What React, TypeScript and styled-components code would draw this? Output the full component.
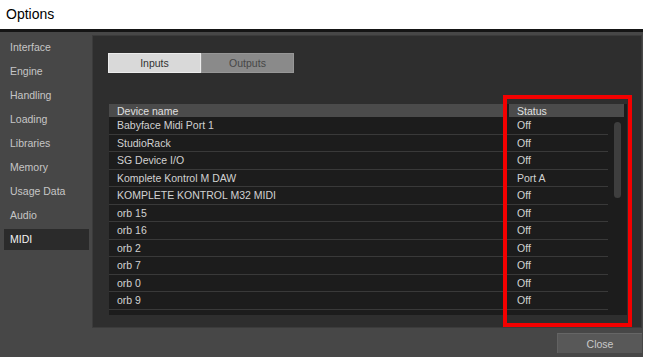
import React from "react";
import styled, { createGlobalStyle } from "styled-components";

const GlobalStyle = createGlobalStyle`
  html, body { margin: 0; padding: 0; background: #ffffff; }
  * { box-sizing: border-box; }
`;

const Window = styled.div`
  position: relative;
  width: 643px;
  height: 357px;
  display: flex;
  flex-direction: column;
  background: #474747;
  font-family: "Liberation Sans", Arial, sans-serif;
  overflow: hidden;
`;

const TitleBar = styled.div`
  height: 29px;
  background: #ffffff;
  color: #000;
  font-family: "Liberation Sans", Arial, sans-serif;
  font-size: 14px;
  padding-left: 6px;
  display: flex;
  align-items: center;
  padding-bottom: 2px;
`;

const Divider = styled.div`
  height: 3px;
  background: #151515;
`;

const Body = styled.div`
  flex: 1;
  display: flex;
  min-height: 0;
`;

const Sidebar = styled.nav`
  width: 92px;
  padding: 4.5px 3px 0 4px;
  display: flex;
  flex-direction: column;
  gap: 3px;
`;

const NavItem = styled.div<{ $active?: boolean }>`
  height: 21px;
  display: flex;
  align-items: center;
  padding-left: 6px;
  font-size: 10.5px;
  color: ${(p) => (p.$active ? "#f2f2f2" : "#c6c6c6")};
  background: ${(p) => (p.$active ? "#2b2b2b" : "transparent")};
`;

const Main = styled.div`
  flex: 1;
  display: flex;
  flex-direction: column;
  padding: 3px 1px 0 0;
`;

const Panel = styled.section`
  height: 293px;
  background: #2e2e2e;
  border: 1px solid #3b3b3b;
  padding: 17px 14px 0 15px;
  display: flex;
  flex-direction: column;
`;

const Tabs = styled.div`
  display: flex;
`;

const Tab = styled.div<{ $active?: boolean }>`
  width: 93px;
  height: 20px;
  display: flex;
  align-items: center;
  justify-content: center;
  font-size: 10.5px;
  color: ${(p) => (p.$active ? "#333333" : "#474747")};
  background: ${(p) => (p.$active ? "#d9d9d9" : "#8a8a8a")};
  border: 1px solid ${(p) => (p.$active ? "#ececec" : "#979797")};
`;

const Table = styled.div`
  margin: 31px 0 0 1px;
  width: 518px;
  height: 211px;
  background: #1c1c1c;
  display: flex;
  flex-direction: column;
  overflow: hidden;
`;

const HeadRow = styled.div`
  height: 13px;
  display: flex;
  gap: 2px;
  padding-right: 3px;
`;

const HeadCell = styled.div<{ $w?: number }>`
  ${(p) => (p.$w ? `width: ${p.$w}px;` : "flex: 1;")}
  background: #4b4b4b;
  color: #e0e0e0;
  font-size: 10.5px;
  padding-left: 8px;
  display: flex;
  align-items: center;
`;

const BodyArea = styled.div`
  flex: 1;
  display: flex;
  min-height: 0;
`;

const Rows = styled.div`
  width: 499px;
  display: flex;
  flex-direction: column;
`;

const Row = styled.div`
  height: 17.5px;
  flex: none;
  display: flex;
  align-items: center;
  border-bottom: 1px solid #393939;
  color: #d2d2d2;
  font-size: 10.5px;
`;

const NameCell = styled.div`
  width: 400px;
  padding-left: 8px;
  white-space: nowrap;
`;

const StatusCell = styled.div`
  flex: 1;
  padding-left: 8px;
`;

const ScrollTrack = styled.div`
  flex: 1;
  padding: 5px 0 0 6px;
`;

const Thumb = styled.div`
  width: 7px;
  height: 76px;
  border-radius: 4px;
  background: #3e3e3e;
`;

const Footer = styled.div`
  flex: 1;
  display: flex;
  justify-content: flex-end;
  align-items: flex-start;
  padding-top: 5px;
`;

const CloseButton = styled.div`
  width: 85px;
  height: 20px;
  background: #585858;
  border-top: 1px solid #666;
  border-left: 1px solid #626262;
  color: #c9c9c9;
  font-size: 10.5px;
  display: flex;
  align-items: center;
  justify-content: center;
`;

const Highlight = styled.div`
  position: absolute;
  left: 503px;
  top: 95px;
  width: 129px;
  height: 232px;
  border: 4px solid #f40000;
  pointer-events: none;
`;

const navItems = [
  "Interface",
  "Engine",
  "Handling",
  "Loading",
  "Libraries",
  "Memory",
  "Usage Data",
  "Audio",
  "MIDI",
];

const devices: [string, string][] = [
  ["Babyface Midi Port 1", "Off"],
  ["StudioRack", "Off"],
  ["SG Device I/O", "Off"],
  ["Komplete Kontrol M DAW", "Port A"],
  ["KOMPLETE KONTROL M32 MIDI", "Off"],
  ["orb 15", "Off"],
  ["orb 16", "Off"],
  ["orb 2", "Off"],
  ["orb 7", "Off"],
  ["orb 0", "Off"],
  ["orb 9", "Off"],
];

export default function App() {
  return (
    <>
      <GlobalStyle />
      <Window>
        <TitleBar>Options</TitleBar>
        <Divider />
        <Body>
          <Sidebar>
            {navItems.map((n) => (
              <NavItem key={n} $active={n === "MIDI"}>
                {n}
              </NavItem>
            ))}
          </Sidebar>
          <Main>
            <Panel>
              <Tabs>
                <Tab $active>Inputs</Tab>
                <Tab>Outputs</Tab>
              </Tabs>
              <Table>
                <HeadRow>
                  <HeadCell>Device name</HeadCell>
                  <HeadCell $w={115}>Status</HeadCell>
                </HeadRow>
                <BodyArea>
                  <Rows>
                    {devices.map(([name, status]) => (
                      <Row key={name}>
                        <NameCell>{name}</NameCell>
                        <StatusCell>{status}</StatusCell>
                      </Row>
                    ))}
                  </Rows>
                  <ScrollTrack>
                    <Thumb />
                  </ScrollTrack>
                </BodyArea>
              </Table>
            </Panel>
            <Footer>
              <CloseButton>Close</CloseButton>
            </Footer>
          </Main>
        </Body>
        <Highlight />
      </Window>
    </>
  );
}
